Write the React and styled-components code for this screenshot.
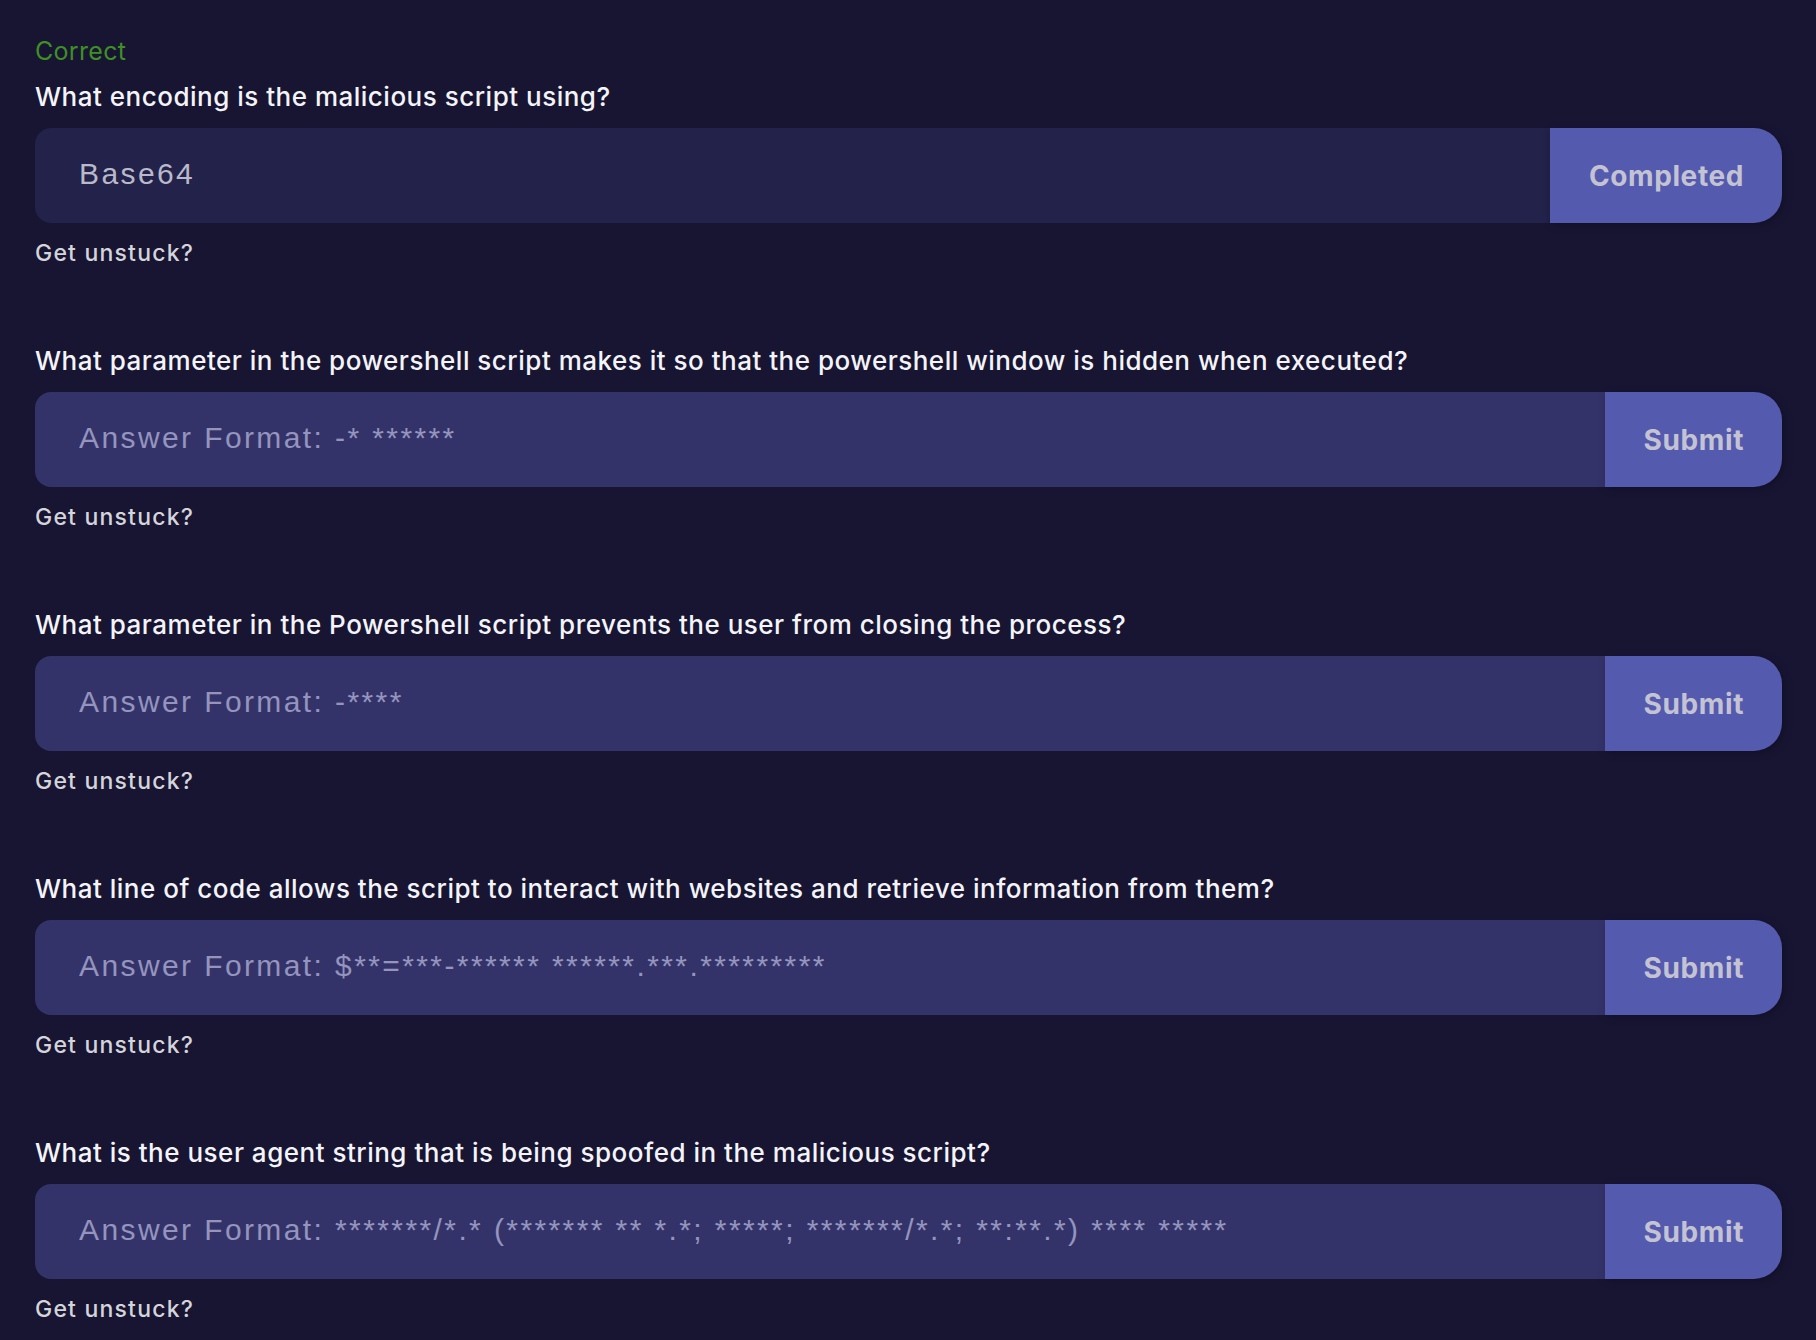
import React from 'react';
import styled, { createGlobalStyle } from 'styled-components';

const GlobalStyle = createGlobalStyle`
  html, body {
    margin: 0;
    padding: 0;
    background: #171532;
  }
  body {
    font-family: Inter, 'Noto Sans', sans-serif;
  }
`;

const Page = styled.div`
  min-height: 1340px;
  box-sizing: border-box;
  padding: 36px 34px 0 35px;
  background: #171532;
`;

const Status = styled.div`
  color: #3f8f25;
  font-size: 25px;
  line-height: 30px;
  font-weight: 400;
  letter-spacing: 0.3px;
  margin-bottom: 16px;
`;

const Section = styled.div`
  margin-bottom: 80px;
`;

const Question = styled.div`
  color: #f4f4f8;
  font-size: 26px;
  line-height: 30px;
  font-weight: 500;
  letter-spacing: 0.5px;
  margin-bottom: 16px;
`;

const AnswerRow = styled.div`
  display: flex;
  height: 95px;
`;

const AnswerInput = styled.input`
  flex: 1;
  min-width: 0;
  border: none;
  outline: none;
  box-sizing: border-box;
  padding: 0 0 4px 44px;
  border-radius: 16px 0 0 16px;
  background: ${props => (props.done ? '#22224a' : '#33336a')};
  color: #b9b9c9;
  font-family: 'Liberation Sans', Arial, sans-serif;
  font-size: 30px;
  letter-spacing: 2.4px;

  &::placeholder {
    color: #9494bd;
    opacity: 1;
  }
`;

const SubmitButton = styled.button`
  border: none;
  box-sizing: border-box;
  padding: 0 38px 0 39px;
  border-radius: 0 28px 28px 0;
  background: #545aae;
  color: #c3c3d3;
  font-family: Inter, 'Noto Sans', sans-serif;
  font-size: 28px;
  font-weight: 700;
  letter-spacing: 0.6px;
  box-shadow: 2px 2px 8px rgba(0, 0, 0, 0.25);
  cursor: pointer;
`;

const Unstuck = styled.div`
  color: #d4d4da;
  font-size: 23px;
  line-height: 26px;
  font-weight: 500;
  letter-spacing: 1.2px;
  margin-top: 17px;
`;

const questions = [
  {
    status: 'Correct',
    text: 'What encoding is the malicious script using?',
    value: 'Base64',
    done: true,
  },
  {
    text: 'What parameter in the powershell script makes it so that the powershell window is hidden when executed?',
    format: '-* ******',
  },
  {
    text: 'What parameter in the Powershell script prevents the user from closing the process?',
    format: '-****',
  },
  {
    text: 'What line of code allows the script to interact with websites and retrieve information from them?',
    format: '$**=***-****** ******.***.*********',
  },
  {
    text: 'What is the user agent string that is being spoofed in the malicious script?',
    format: '*******/*.* (******* ** *.*; *****; *******/*.*; **:**.*) **** *****',
  },
];

export default function App() {
  return (
    <Page>
      <GlobalStyle />
      {questions.map((q, i) => (
        <Section key={i}>
          {q.status && <Status>{q.status}</Status>}
          <Question>{q.text}</Question>
          <AnswerRow>
            {q.done ? (
              <AnswerInput done value={q.value} readOnly />
            ) : (
              <AnswerInput placeholder={`Answer Format: ${q.format}`} />
            )}
            <SubmitButton>{q.done ? 'Completed' : 'Submit'}</SubmitButton>
          </AnswerRow>
          <Unstuck>Get unstuck?</Unstuck>
        </Section>
      ))}
    </Page>
  );
}
